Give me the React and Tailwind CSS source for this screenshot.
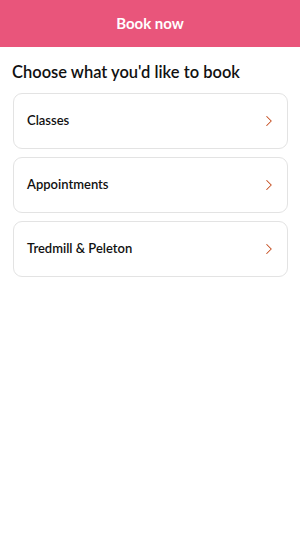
import { ChevronRight } from "lucide-react";

const items = ["Classes", "Appointments", "Tredmill & Peleton"];

const App = () => {
  return (
    <div className="min-h-screen bg-white" style={{ fontFamily: "Lato, 'Open Sans', sans-serif" }}>
      <div className="h-[47px] bg-[#e9557b] flex items-center justify-center">
        <span className="text-white text-[15px] font-bold">Book now</span>
      </div>
      <div className="px-[12px] pt-[14px]">
        <h1 className="text-[16.5px] font-semibold text-[#111] leading-[22px]">Choose what you'd like to book</h1>
        <div className="flex flex-col gap-[8px] mt-[10px]">
          {items.map((item) => (
            <div
              key={item}
              className="h-[56px] ml-[1px] border border-[#e3e3e3] rounded-[9px] flex items-center justify-between pl-[13px] pr-[9px]"
            >
              <span className="text-[13px] font-semibold text-[#111]">{item}</span>
              <ChevronRight size={18} strokeWidth={1.4} className="text-[#c44a1c]" />
            </div>
          ))}
        </div>
      </div>
    </div>
  );
};

export default App;
